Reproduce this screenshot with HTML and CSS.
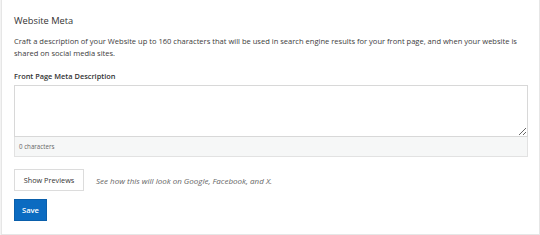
FILE: index.html
```html
<!DOCTYPE html>
<html>
<head>
<meta charset="utf-8">
<link rel="stylesheet" href="styles.css">
</head>
<body>
<div class="card">
  <h2 class="title">Website Meta</h2>
  <p class="desc">Craft a description of your Website up to 160 characters that will be used in search engine results for your front page, and when your website is shared on social media sites.</p>
  <label class="label">Front Page Meta Description</label>
  <div class="field">
    <textarea class="input"></textarea>
    <div class="counter">0 characters</div>
  </div>
  <div class="preview-row">
    <button class="btn">Show Previews</button>
    <span class="hint">See how this will look on Google, Facebook, and X.</span>
  </div>
  <button class="btn-primary">Save</button>
</div>
</body>
</html>
```
FILE: styles.css
```css
html, body {
  margin: 0;
  padding: 0;
  background: #f3f3f3;
  font-family: "Open Sans", "Noto Sans", sans-serif;
}
.card {
  width: 525px;
  height: 219px;
  margin: -1px 0 0 1px;
  background: #fff;
  border: 1px solid #e6e6e6;
  padding: 15px 0 0 12px;
}
.title {
  margin: 0;
  font-size: 9.3px;
  font-weight: 400;
  color: #333;
  line-height: 12px;
}
.desc {
  margin: 8px 0 0;
  font-size: 7.55px;
  line-height: 12px;
  color: #3c3c3c;
  width: 512px;
}
.label {
  display: block;
  margin-top: 11px;
  font-size: 7.4px;
  font-weight: 600;
  color: #333;
  line-height: 12px;
}
.field {
  margin-top: 3px;
  width: 514px;
}
.input {
  display: block;
  box-sizing: border-box;
  width: 514px;
  height: 52px;
  margin: 0;
  border: 1px solid #d8d8d8;
  border-radius: 0;
  resize: vertical;
}
.counter {
  box-sizing: border-box;
  height: 20px;
  background: #f6f7f7;
  border: 1px solid #e2e2e2;
  border-top: 0;
  padding: 0 4px;
  font-size: 6.2px;
  line-height: 20px;
  color: #666;
}
.preview-row {
  display: flex;
  align-items: center;
  gap: 12px;
  margin-top: 12px;
}
.btn {
  box-sizing: border-box;
  height: 22px;
  width: 70px;
  padding: 0;
  background: #fff;
  border: 1px solid #dcdcdc;
  font-family: inherit;
  font-size: 7.3px;
  color: #333;
}
.hint {
  font-size: 8px;
  font-style: italic;
  color: #666;
}
.btn-primary {
  display: block;
  margin-top: 8px;
  box-sizing: border-box;
  height: 22px;
  width: 33px;
  padding: 0;
  background: #0b6bc1;
  border: 1px solid #0a5fab;
  color: #fff;
  font-family: inherit;
  font-size: 7.6px;
  font-weight: 600;
}
```
